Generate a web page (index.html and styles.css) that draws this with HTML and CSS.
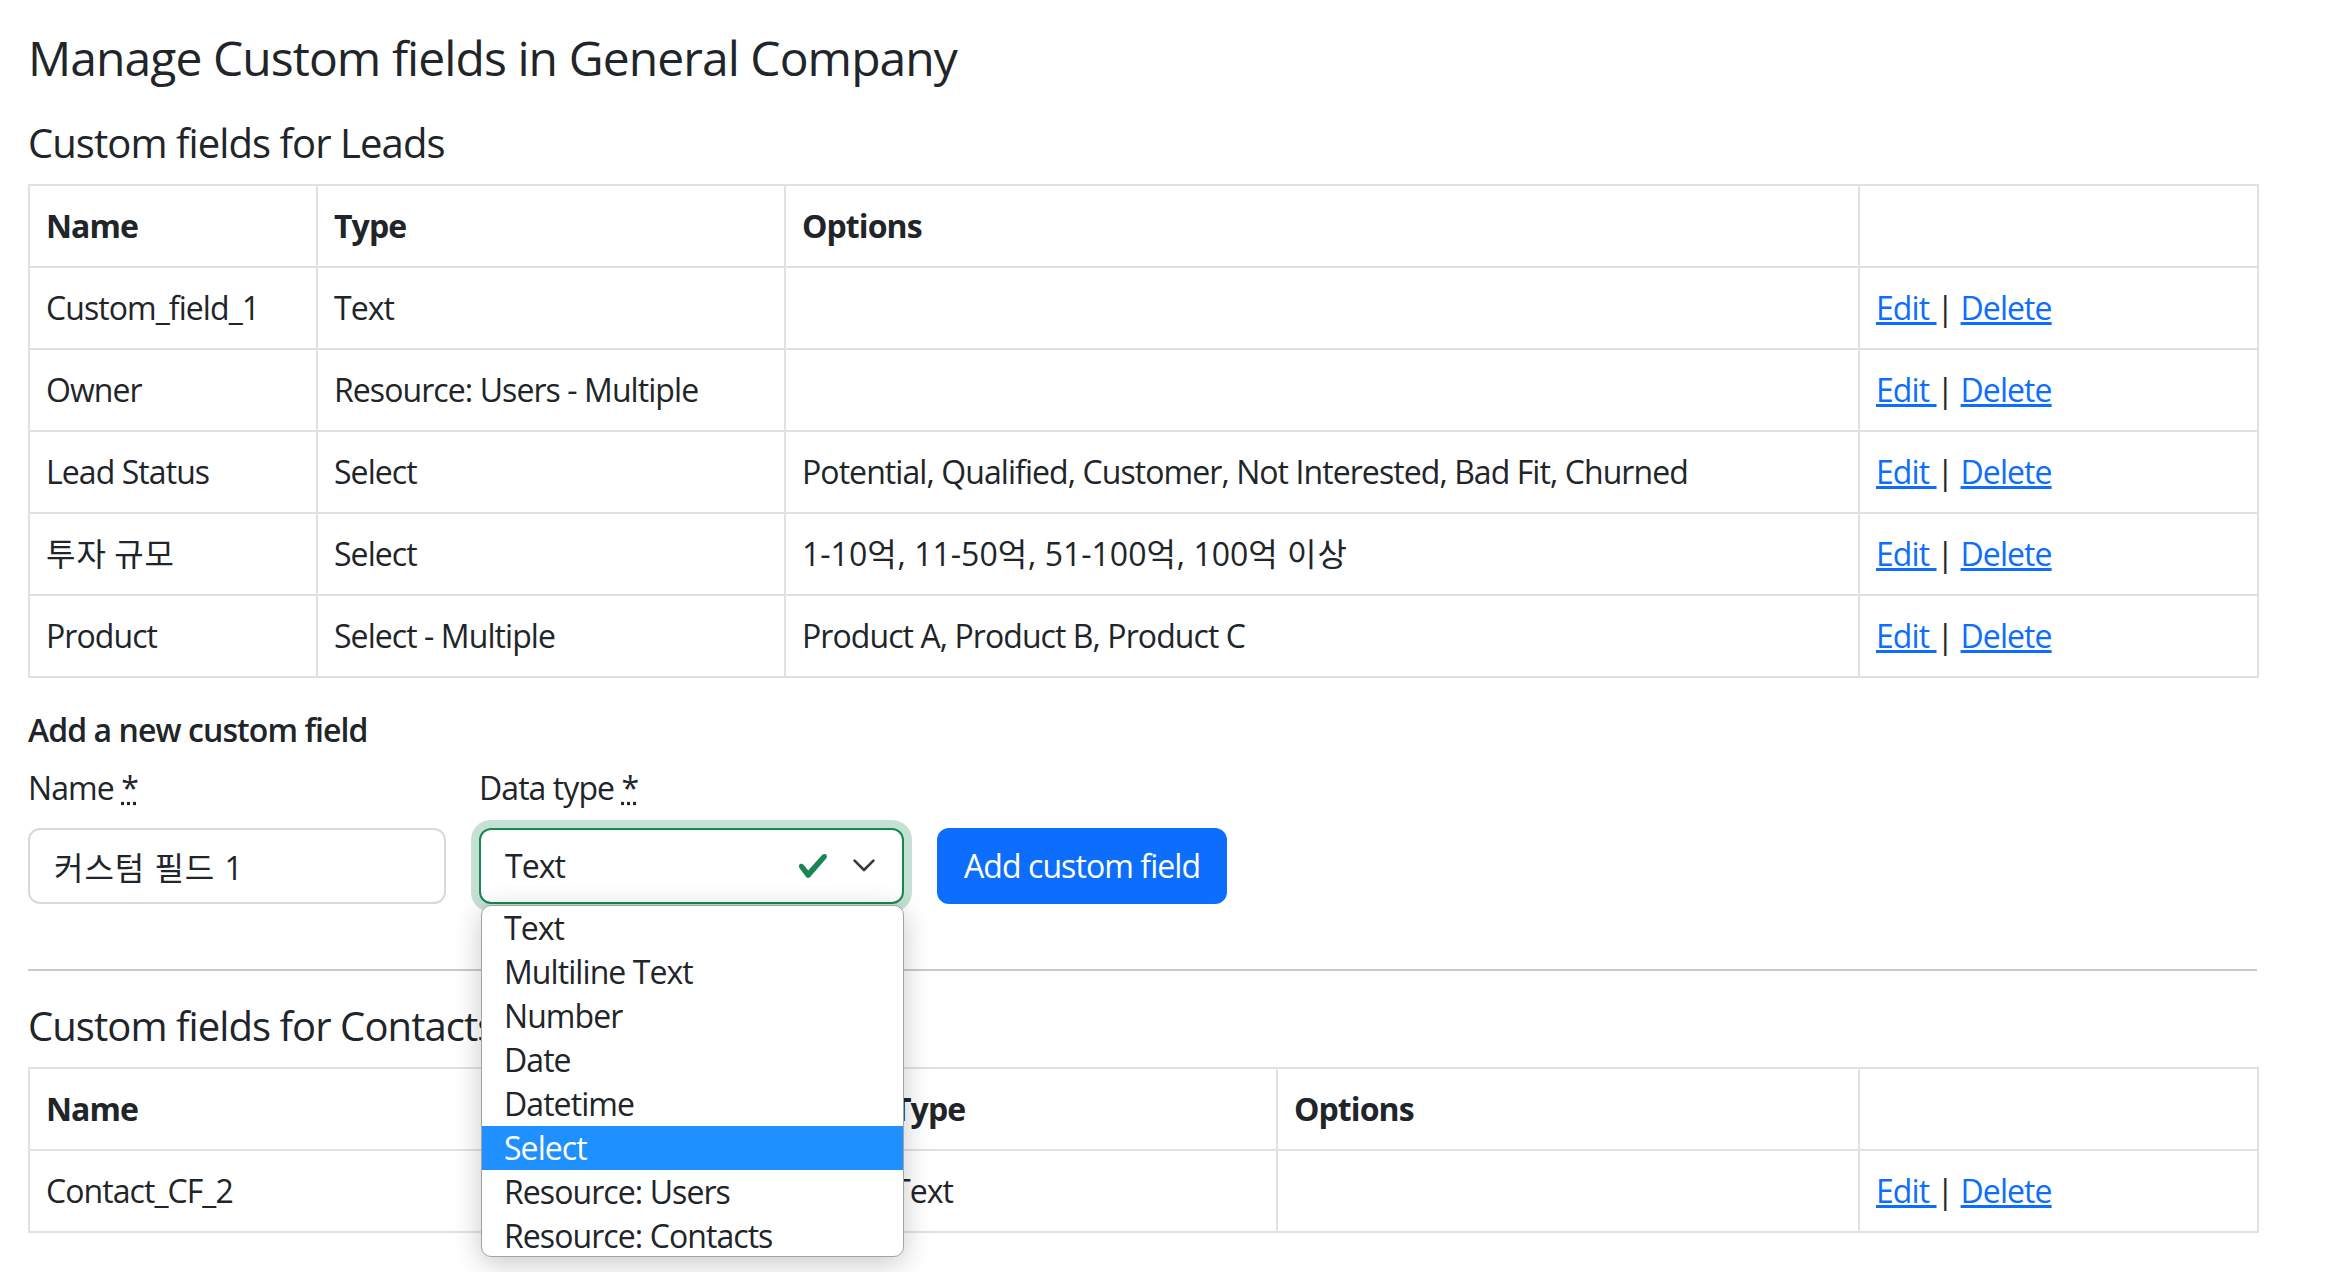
FILE: index.html
```html
<!DOCTYPE html>
<html lang="en">
<head>
<meta charset="utf-8">
<title>Manage Custom fields in General Company</title>
<link rel="stylesheet" href="styles.css">
</head>
<body>
<div class="page">
  <h1 class="page-title">Manage Custom fields in General Company</h1>

  <section class="entity">
    <h2 class="section-title">Custom fields for Leads</h2>
    <table class="fields-table">
      <colgroup>
        <col class="w-288"><col class="w-468"><col class="w-1074"><col class="w-399">
      </colgroup>
      <thead>
        <tr><th>Name</th><th>Type</th><th>Options</th><th></th></tr>
      </thead>
      <tbody>
        <tr><td>Custom_field_1</td><td>Text</td><td></td><td class="actions"><a href="#">Edit </a>| <a href="#">Delete</a></td></tr>
        <tr><td>Owner</td><td>Resource: Users - Multiple</td><td></td><td class="actions"><a href="#">Edit </a>| <a href="#">Delete</a></td></tr>
        <tr><td>Lead Status</td><td>Select</td><td>Potential, Qualified, Customer, Not Interested, Bad Fit, Churned</td><td class="actions"><a href="#">Edit </a>| <a href="#">Delete</a></td></tr>
        <tr><td><span class="ko">투자</span> <span class="ko">규모</span></td><td>Select</td><td class="mixed">1-10<span class="ko">억</span>, 11-50<span class="ko">억</span>, 51-100<span class="ko">억</span>, 100<span class="ko">억</span> <span class="ko">이상</span></td><td class="actions"><a href="#">Edit </a>| <a href="#">Delete</a></td></tr>
        <tr><td>Product</td><td>Select - Multiple</td><td>Product A, Product B, Product C</td><td class="actions"><a href="#">Edit </a>| <a href="#">Delete</a></td></tr>
      </tbody>
    </table>

    <form class="add-form" onsubmit="return false">
      <h3 class="form-title">Add a new custom field</h3>
      <div class="form-row">
        <div class="field field-name">
          <label class="form-label">Name <abbr title="required">*</abbr></label>
          <input class="text-input" type="text" value="커스텀 필드 1">
        </div>
        <div class="field field-type">
          <label class="form-label">Data type <abbr title="required">*</abbr></label>
          <div class="select-wrap">
            <div class="select is-valid">
              <span class="select-value">Text</span>
              <svg class="icon-check" viewBox="0 0 8 8" aria-hidden="true"><path fill="#198754" d="M2.3 6.73.6 4.53c-.4-1.04.46-1.4 1.1-.8l1.1 1.4 3.4-3.8c.6-.63 1.6-.27 1.2.7l-4 4.6c-.43.5-.8.4-1.1.1z"/></svg>
              <svg class="icon-chevron" viewBox="0 0 22 14" aria-hidden="true"><path d="M1.6 1.6 11 11 20.4 1.6" fill="none" stroke="#343a40" stroke-width="2.6" stroke-linecap="round" stroke-linejoin="round"/></svg>
            </div>
            <ul class="select-popup">
              <li>Text</li>
              <li>Multiline Text</li>
              <li>Number</li>
              <li>Date</li>
              <li>Datetime</li>
              <li class="active">Select</li>
              <li>Resource: Users</li>
              <li>Resource: Contacts</li>
            </ul>
          </div>
        </div>
        <div class="field field-submit">
          <button class="btn-primary" type="submit">Add custom field</button>
        </div>
      </div>
    </form>
  </section>

  <hr class="divider">

  <section class="entity">
    <h2 class="section-title">Custom fields for Contacts</h2>
    <table class="fields-table">
      <colgroup>
        <col class="w-847"><col class="w-401"><col class="w-582"><col class="w-399">
      </colgroup>
      <thead>
        <tr><th>Name</th><th>Type</th><th>Options</th><th></th></tr>
      </thead>
      <tbody>
        <tr><td>Contact_CF_2</td><td>Text</td><td></td><td class="actions"><a href="#">Edit </a>| <a href="#">Delete</a></td></tr>
      </tbody>
    </table>
    <form class="add-form" onsubmit="return false">
      <h3 class="form-title">Add a new custom field</h3>
    </form>
  </section>
</div>
</body>
</html>
```

FILE: styles.css
```css
html, body {
  margin: 0;
  background: #fff;
}

body {
  font-family: "Open Sans", "Noto Sans CJK KR", sans-serif;
  font-size: 32px;
  line-height: 1.5;
  color: #212529;
  letter-spacing: -0.029em;
}

.page {
  padding: 29px 70px 0 28px;
}

.page-title {
  font-size: 48px;
  font-weight: 400;
  line-height: 1.2;
  margin: 0 0 32px;
}

.section-title {
  font-size: 40px;
  font-weight: 400;
  line-height: 1.2;
  margin: 0 0 17px;
}

.fields-table {
  width: 100%;
  border-collapse: collapse;
  table-layout: fixed;
  border: 2px solid #dee2e6;
  margin: 0 0 33px;
}

.fields-table th,
.fields-table td {
  box-sizing: border-box;
  height: 82px;
  border: 2px solid #dee2e6;
  padding: 16px;
  line-height: 48px;
  text-align: left;
  vertical-align: top;
  white-space: nowrap;
}

.fields-table th {
  font-weight: 700;
}

.w-288 { width: 288px; }
.w-468 { width: 468px; }
.w-1074 { width: 1074px; }
.w-399 { width: 399px; }
.w-847 { width: 847px; }
.w-401 { width: 401px; }
.w-582 { width: 582px; }

.mixed {
  letter-spacing: 0;
}

.ko {
  font-family: "Noto Sans CJK KR", sans-serif;
  letter-spacing: 0.03em;
  line-height: 1;
}

.actions a {
  color: #0d6efd;
  text-decoration: underline;
}

.form-title {
  font-size: 32px;
  font-weight: 600;
  line-height: 1.2;
  margin: 0 0 15px;
}

.form-row {
  display: flex;
  align-items: flex-end;
  gap: 33px;
}

.form-label {
  display: block;
  line-height: 48px;
  margin-bottom: 16px;
}

abbr {
  text-decoration: underline dotted;
  cursor: help;
}

.field-name {
  width: 418px;
}

.text-input {
  box-sizing: border-box;
  display: block;
  width: 100%;
  height: 76px;
  padding: 12px 24px;
  border: 2px solid #d6dade;
  border-radius: 12px;
  font: inherit;
  font-family: "Open Sans", "Noto Sans CJK KR", sans-serif;
  letter-spacing: 0.03em;
  line-height: 48px;
  color: #212529;
  background: #fff;
  outline: none;
}

.field-type {
  width: 425px;
}

.select-wrap {
  position: relative;
}

.select {
  box-sizing: border-box;
  height: 76px;
  display: flex;
  align-items: center;
  padding: 0 27px 0 24px;
  border: 2px solid #198754;
  border-radius: 12px;
  background: #fff;
  box-shadow: 0 0 0 8px rgba(25, 135, 84, 0.25);
}

.select-value {
  flex: 1;
  line-height: 48px;
}

.icon-check {
  width: 32px;
  height: 32px;
  margin-right: 24px;
}

.icon-chevron {
  width: 22px;
  height: 14px;
}

.btn-primary {
  box-sizing: border-box;
  height: 76px;
  padding: 12px 25px;
  border: 2px solid #0d6efd;
  border-radius: 12px;
  background: #0d6efd;
  color: #fff;
  font: inherit;
  letter-spacing: inherit;
  line-height: 48px;
  cursor: pointer;
}

.select-popup {
  position: absolute;
  left: 2px;
  top: calc(100% + 1px);
  width: 423px;
  height: 352px;
  box-sizing: border-box;
  margin: 0;
  padding: 0;
  list-style: none;
  background: #fff;
  border: 1px solid #a3a3a3;
  border-radius: 10px;
  overflow: hidden;
  box-shadow: 0 6px 28px rgba(0, 0, 0, 0.22);
  z-index: 10;
}

.select-popup li {
  height: 44px;
  line-height: 44px;
  padding-left: 22px;
  white-space: nowrap;
}

.select-popup li.active {
  background: #1e90ff;
  color: #fff;
}

.divider {
  margin: 65px 0 31.5px;
  border: 0;
  border-top: 2px solid #c8c9ca;
  height: 0;
}
```
